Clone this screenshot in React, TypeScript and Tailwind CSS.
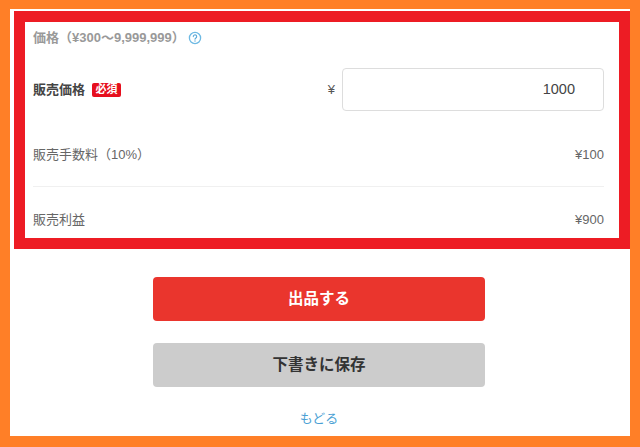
export default function App() {
  const font = "font-['Liberation_Sans','Noto_Sans_CJK_JP',sans-serif]";
  return (
    <div className={`w-[640px] h-[447px] overflow-hidden bg-[#ff7f27] pt-[9px] pr-[10px] pb-[11px] pl-[10px] ${font}`}>
      <div className="h-[427px] bg-white pt-[2px] pl-[4px] flex flex-col">
        <div className="w-[616px] h-[238px] shrink-0 border-[11px] border-[#ed1c24] pl-[8px] pr-[15px] flex flex-col">
          <div className="h-[30px] pt-[1px] flex items-center gap-[3px] text-[13px] font-bold text-[#999999]">
            <span>価格（¥300～9,999,999）</span>
            <svg width="14" height="14" viewBox="0 0 14 14" fill="none">
              <circle cx="7" cy="7" r="5.6" stroke="#6db9e3" strokeWidth="1.3" />
              <path d="M5.3 5.6a1.7 1.7 0 1 1 2.6 1.4c-.6.4-.9.7-.9 1.3" stroke="#5aa9d8" strokeWidth="1.1" strokeLinecap="round" />
              <circle cx="7" cy="10" r=".7" fill="#5aa9d8" />
            </svg>
          </div>
          <div className="mt-[16px] h-[43px] flex items-center justify-between">
            <div className="flex items-center gap-[7px]">
              <span className="text-[13px] font-bold text-[#444444]">販売価格</span>
              <span className="w-[29px] h-[14px] rounded-[2px] bg-[#e60f1e] text-white text-[11px] font-bold flex items-center justify-center leading-none">必須</span>
            </div>
            <div className="flex items-center gap-[7px]">
              <span className="text-[13px] text-[#555555]">¥</span>
              <div className="w-[262px] h-[43px] rounded-[4px] border border-[#dddddd] bg-white flex items-center justify-end pr-[28px] text-[14.5px] text-[#444444]">1000</div>
            </div>
          </div>
          <div className="mt-[23px] h-[42px] flex items-center justify-between text-[13px] text-[#666666]">
            <span>販売手数料（10%）</span>
            <span>¥100</span>
          </div>
          <div className="mt-[10px] h-px bg-[#f0f0f0]" />
          <div className="mt-[15px] h-[36px] flex items-center justify-between text-[13px] text-[#666666]">
            <span>販売利益</span>
            <span>¥900</span>
          </div>
        </div>
        <div className="w-[332px] ml-[139px] mt-[28px] flex flex-col">
          <button className="h-[44px] rounded-[4px] bg-[#ea352d] text-white text-[15.5px] font-bold">出品する</button>
          <button className="mt-[22px] h-[44px] rounded-[4px] bg-[#cccccc] text-[#333333] text-[15.5px] font-bold">下書きに保存</button>
          <div className="mt-[22px] text-center text-[13px] leading-[20px] text-[#4a9fd4]">もどる</div>
        </div>
      </div>
    </div>
  );
}
